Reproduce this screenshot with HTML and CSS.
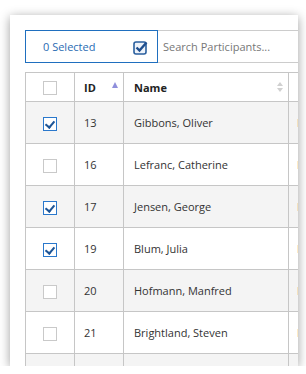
FILE: index.html
```html
<!DOCTYPE html>
<html lang="en">
<head>
    <meta charset="UTF-8">
    <meta name="viewport" content="width=device-width, initial-scale=1.0">
    <title>Participants</title>
    <link rel="stylesheet" href="styles.css">
</head>
<body>
    <div class="panel">
        <div class="toolbar">
            <button class="selected-btn">
                <span>0 Selected</span>
                <svg class="sel-icon" width="16" height="15" viewBox="0 0 16 15">
                    <rect x="1" y="2" width="12" height="12" rx="2" fill="#eef3fa" stroke="#2a5f9e" stroke-width="1.6"/>
                    <path d="M3.5 7.5 L6.5 10.5 L13.5 2.5" fill="none" stroke="#1f4f8f" stroke-width="2.4"/>
                </svg>
            </button>
            <input type="text" class="search" placeholder="Search Participants...">
        </div>

        <table class="grid">
            <thead>
                <tr>
                    <th class="col-check"><span class="box"></span></th>
                    <th class="col-id">ID <span class="sort-asc"></span></th>
                    <th class="col-name">Name <span class="sort-both"><i class="up"></i><i class="down"></i></span></th>
                    <th class="col-dept">Department</th>
                </tr>
            </thead>
            <tbody>
                <tr class="alt">
                    <td class="col-check"><span class="box checked"></span></td>
                    <td>13</td>
                    <td>Gibbons, Oliver</td>
                    <td class="dept">Development</td>
                </tr>
                <tr>
                    <td class="col-check"><span class="box"></span></td>
                    <td>16</td>
                    <td>Lefranc, Catherine</td>
                    <td class="dept">Design</td>
                </tr>
                <tr class="alt">
                    <td class="col-check"><span class="box checked"></span></td>
                    <td>17</td>
                    <td>Jensen, George</td>
                    <td class="dept">Development</td>
                </tr>
                <tr>
                    <td class="col-check"><span class="box checked"></span></td>
                    <td>19</td>
                    <td>Blum, Julia</td>
                    <td class="dept">Business</td>
                </tr>
                <tr class="alt">
                    <td class="col-check"><span class="box"></span></td>
                    <td>20</td>
                    <td>Hofmann, Manfred</td>
                    <td class="dept">Design</td>
                </tr>
                <tr>
                    <td class="col-check"><span class="box"></span></td>
                    <td>21</td>
                    <td>Brightland, Steven</td>
                    <td class="dept">Business</td>
                </tr>
                <tr class="alt">
                    <td class="col-check"><span class="box"></span></td>
                    <td>22</td>
                    <td>Dorn, Patrick</td>
                    <td class="dept">Development</td>
                </tr>
            </tbody>
        </table>
    </div>
</body>
</html>
```

FILE: styles.css
```css
*{
    margin: 0;
    padding: 0;
    box-sizing: border-box;
}

body{
    background: #ffffff;
    padding: 15px 8px 0 10px;
    font-family: "Open Sans", "Liberation Sans", sans-serif;
    font-size: 11px;
    color: #333333;
}

.panel{
    width: 288px;
    height: 351px;
    background: #ffffff;
    padding: 15px 0 0 15px;
    overflow: hidden;
    box-shadow: 0px 2px 10px rgba(0, 0, 0, 0.38);
}

.toolbar{
    display: flex;
    width: 400px;
    height: 33px;
}

.selected-btn{
    width: 133px;
    height: 33px;
    display: flex;
    align-items: center;
    justify-content: space-between;
    padding: 0 8px 0 17px;
    border: 1px solid #1f6fbf;
    background: #ffffff;
    color: #2a6cb3;
    font-family: inherit;
    font-size: 11px;
}

.sel-icon{
    margin-top: 1px;
}

.search{
    flex: 1;
    height: 33px;
    border: 1px solid #cccccc;
    border-left: none;
    padding: 0 5px;
    font-family: inherit;
    font-size: 11px;
    color: #333333;
    outline: none;
}

.search::placeholder{
    color: #777777;
}

.grid{
    margin-top: 9px;
    width: 400px;
    border-collapse: collapse;
    table-layout: fixed;
}

.grid th,
.grid td{
    border: 1px solid #c6c6c6;
    text-align: left;
    white-space: nowrap;
    overflow: hidden;
}

.grid th{
    height: 29px;
    padding: 0 9px;
    font-weight: bold;
    color: #222222;
    background: #ffffff;
}

.grid td{
    height: 42px;
    padding: 0 9px;
}

.grid td.dept{
    padding-left: 8px;
}

.grid tbody tr.alt td{
    background: #f4f4f4;
}

.grid .col-check{
    width: 49px;
    text-align: center;
    padding: 0;
}

.grid .col-id{
    width: 49px;
}

.grid .col-name{
    width: 165px;
    padding-left: 10px;
}

.grid td:nth-child(3){
    padding-left: 10px;
}

.grid .col-dept{
    width: 137px;
}

.box{
    display: inline-block;
    width: 14px;
    height: 14px;
    border: 1px solid #c9c9c9;
    background: #ffffff;
    vertical-align: middle;
    position: relative;
}

.box.checked{
    border-color: #2a78cc;
}

.box.checked::after{
    content: "";
    position: absolute;
    left: 3px;
    top: 1px;
    width: 4px;
    height: 7px;
    border: solid #1d5597;
    border-width: 0 2px 2px 0;
    transform: rotate(40deg);
}

.col-id,
.col-name{
    position: relative;
}

.sort-asc{
    position: absolute;
    right: 5px;
    top: 9px;
    border-left: 3.5px solid transparent;
    border-right: 3.5px solid transparent;
    border-bottom: 6px solid #8f8fdc;
}

.sort-both{
    position: absolute;
    right: 5px;
    top: 9px;
    display: flex;
    flex-direction: column;
    gap: 2px;
}

.sort-both i{
    display: block;
    border-left: 3.5px solid transparent;
    border-right: 3.5px solid transparent;
}

.sort-both .up{
    border-bottom: 4px solid #d0d0d0;
}

.sort-both .down{
    border-top: 4px solid #d0d0d0;
}
```
